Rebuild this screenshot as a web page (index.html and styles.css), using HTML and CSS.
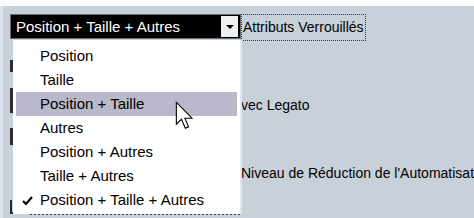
FILE: index.html
```html
<!DOCTYPE html>
<html>
<head>
<meta charset="utf-8">
<link rel="stylesheet" href="styles.css">
</head>
<body>
<div class="top-strip"></div>
<div class="panel">
  <div class="head-row">
    <div class="combo">
      <span class="combo-text">Position + Taille + Autres</span>
      <span class="combo-btn"><span class="tri"></span></span>
    </div>
    <div class="focus-label">Attributs Verrouillés</div>
  </div>
  <div class="body-row">
    <div class="rail">
      <div class="mark m1"></div>
      <div class="mark m2"></div>
      <div class="mark m3"></div>
      <div class="corner"></div>
    </div>
    <div class="labels">
      <div class="lbl l1">vec Legato</div>
      <div class="lbl l2">Niveau de Réduction de l'Automatisation</div>
    </div>
  </div>
  <div class="peek"></div>

  <div class="menu">
    <div class="item">Position</div>
    <div class="item">Taille</div>
    <div class="item hl">Position + Taille</div>
    <div class="item">Autres</div>
    <div class="item">Position + Autres</div>
    <div class="item">Taille + Autres</div>
    <div class="item checked"><svg class="check" width="11" height="10" viewBox="0 0 11 10"><path d="M1 5 L4 8 L10 1" fill="none" stroke="#000" stroke-width="2.2"/></svg>Position + Taille + Autres</div>
  </div>
  <svg class="cursor" width="19" height="30" viewBox="0 0 14 22"><path d="M1 1 L1 17 L4.8 13.4 L7.6 20 L10 19 L7.3 12.6 L12.5 12.6 Z" fill="#fff" stroke="#000" stroke-width="0.8" stroke-linejoin="miter"/></svg>
</div>
</body>
</html>
```
FILE: styles.css
```css
html, body {
  margin: 0;
  padding: 0;
}
body {
  width: 474px;
  height: 218px;
  overflow: hidden;
  background: #c8d0d9;
  font-family: "Liberation Sans", Arial, sans-serif;
  font-size: 14px;
  color: #000;
}
.top-strip {
  height: 6px;
  background: #fbfcfd;
}
.panel {
  position: relative;
  height: 212px;
  border-left: 3px solid #dde3ea;
  box-sizing: border-box;
}
.head-row {
  display: flex;
  align-items: flex-start;
  padding-top: 8px;
  padding-left: 7px;
}
.combo {
  width: 231px;
  height: 25px;
  box-sizing: border-box;
  background: #000;
  border: 1px solid #6b6f74;
  display: flex;
  align-items: center;
  justify-content: space-between;
}
.combo-text {
  color: #fff;
  font-size: 15px;
  padding-left: 5px;
}
.combo-btn {
  width: 17px;
  height: 21px;
  margin-right: 2px;
  background: #eef0f2;
  display: flex;
  align-items: center;
  justify-content: center;
}
.tri {
  width: 0;
  height: 0;
  border-left: 4px solid transparent;
  border-right: 4px solid transparent;
  border-top: 4px solid #000;
}
.focus-label {
  height: 27px;
  box-sizing: border-box;
  border: 1px dotted #333;
  padding: 4px 1px 0 1px;
  line-height: 17px;
}
.body-row {
  display: flex;
}
.rail {
  width: 238px;
  flex-shrink: 0;
}
.mark {
  width: 3px;
  margin-left: 7px;
  background: #2a2d30;
}
.m1 { margin-top: 19px; height: 12px; }
.m2 { margin-top: 16px; height: 25px; }
.m3 { margin-top: 15px; height: 17px; }
.corner {
  margin-top: 55px;
  margin-left: 7px;
  width: 16px;
  height: 14px;
  border-left: 2px solid #2a2d30;
  border-bottom: 2px solid #2a2d30;
  box-sizing: border-box;
}
.labels {
  white-space: nowrap;
  overflow: hidden;
  flex: 1;
}
.lbl {
  height: 16px;
  line-height: 16px;
}
.l1 { margin-top: 56px; }
.l2 { margin-top: 52px; }
.peek {
  position: absolute;
  left: 27px;
  top: 207px;
  width: 210px;
  border-top: 2px dotted #3c4046;
}
.menu {
  position: absolute;
  left: 10px;
  top: 34px;
  width: 228px;
  height: 174px;
  box-sizing: border-box;
  background: #fff;
  border-right: 1px solid #e4e8ee;
  padding-top: 4px;
  box-shadow: 1px 0 0 #dfe3e9;
}
.item {
  height: 24px;
  line-height: 24px;
  font-size: 15px;
  margin: 0 3px;
  padding-left: 24px;
  position: relative;
}
.hl {
  background: #bab8cb;
}
.check {
  position: absolute;
  left: 6px;
  top: 8px;
}
.cursor {
  position: absolute;
  left: 172px;
  top: 95px;
}
```
